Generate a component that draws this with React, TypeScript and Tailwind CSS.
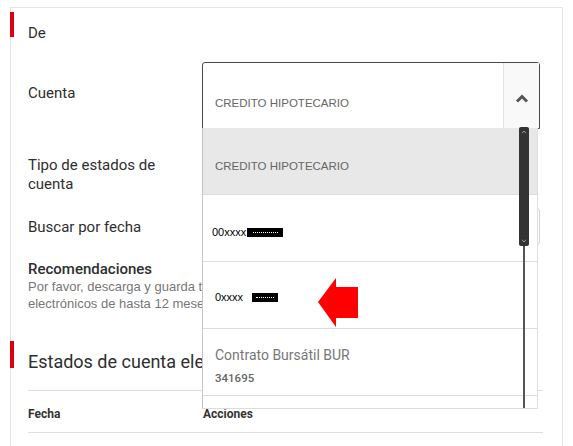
import React from "react";

function Masked({ w }: { w: number }) {
  return (
    <span
      className="inline-flex items-center justify-center bg-black h-[9px] align-middle"
      style={{ width: w }}
    >
      <span className="block h-px w-[70%] border-t border-dotted border-white" />
    </span>
  );
}

export default function App() {
  return (
    <div className="relative w-[573px] h-[446px] overflow-hidden bg-white pt-[7px] pl-[10px] font-['Roboto',sans-serif] text-[#2e2e2e]">
      <div className="w-[553px] h-[460px] border border-[#e4e4e4]">
        {/* De header */}
        <div className="flex items-start mt-[4px]">
          <div className="-ml-px w-[4px] h-[25px] bg-[#db0011]" />
          <div className="ml-[14px] mt-[12px] text-[15px] leading-[18px]">De</div>
        </div>

        <div className="pl-[17px]">
          {/* Cuenta row */}
          <div className="flex mt-[20px] h-[67px]">
            <div className="w-[174px] pt-[22px] text-[15px] leading-[18px]">Cuenta</div>
            <div className="relative w-[338px] h-[67px] z-10">
              <div className="flex h-full border border-[#4a4a4a] rounded-t-[3px] bg-white">
                <div className="flex-1 pl-[12px] pt-[33px] font-['Liberation_Sans',Arial,sans-serif] text-[11.5px] leading-[14px] text-[#666]">
                  CREDITO HIPOTECARIO
                </div>
                <div className="w-[36px] border-l border-[#e2e2e2] bg-[#f9f9f9] flex justify-center pt-[31px]">
                  <svg width="14" height="9" viewBox="0 0 14 9">
                    <polyline points="2,7.5 7,2.5 12,7.5" fill="none" stroke="#555" strokeWidth="3" />
                  </svg>
                </div>
              </div>

              {/* Dropdown list */}
              <div className="absolute left-0 top-[66px] w-[336px] h-[281px] bg-white border-l border-[#c4c4c4] border-r border-r-[#e0e0e0] border-b border-b-[#dcdcdc] font-['Liberation_Sans',Arial,sans-serif]">
                <div className="h-[67px] bg-[#e8e8e8] border-b border-[#dcdcdc] pl-[12px] pt-[31px] text-[11.5px] leading-[14px] text-[#666]">
                  CREDITO HIPOTECARIO
                </div>
                <div className="h-[67px] border-b border-[#dcdcdc] pl-[9px] pt-[30px] text-[11px] leading-[14px] text-black flex items-start">
                  <span>00xxxx</span>
                  <span className="ml-[1px] -mt-[1px]"><Masked w={36} /></span>
                </div>
                <div className="h-[67px] border-b border-[#dcdcdc] pl-[12px] pt-[28px] text-[11px] leading-[14px] text-black flex items-start">
                  <span>0xxxx</span>
                  <span className="ml-[9px] -mt-[1px]"><Masked w={26} /></span>
                </div>
                <div className="h-[67px] border-b border-[#dcdcdc] pl-[12px] pt-[17px]">
                  <div className="font-['Roboto',sans-serif] text-[14px] leading-[18px] text-[#777]">Contrato Bursátil BUR</div>
                  <div className="mt-[7px] font-['Roboto',sans-serif] text-[11.5px] leading-[14px] font-medium text-[#666]">341695</div>
                </div>

                {/* scrollbar */}
                <div className="absolute left-[316px] top-[-1px] w-[10px] h-[119px] rounded-[2px] bg-[#333] flex flex-col items-center justify-between py-[3px]">
                  <svg width="6" height="4" viewBox="0 0 6 4">
                    <polyline points="1,3.2 3,1 5,3.2" fill="none" stroke="#999" strokeWidth="1" />
                  </svg>
                  <svg width="6" height="4" viewBox="0 0 6 4">
                    <polyline points="1,0.8 3,3 5,0.8" fill="none" stroke="#999" strokeWidth="1" />
                  </svg>
                </div>
                <div className="absolute left-[320px] top-[118px] w-[2px] h-[162px] bg-[#555]" />
              </div>
            </div>
          </div>

          {/* Tipo row */}
          <div className="flex h-[79px]">
            <div className="w-[174px] pt-[27px] text-[15px] leading-[19px]">
              Tipo de estados de
              <br />
              cuenta
            </div>
          </div>

          {/* Buscar row */}
          <div className="flex h-[37px]">
            <div className="w-[174px] pt-[10px] text-[15px] leading-[18px]">Buscar por fecha</div>
            <div className="w-[338px] h-[37px] border border-[#d6d6d6] rounded-[3px]" />
          </div>

          {/* Recomendaciones */}
          <div className="mt-[15px] text-[15px] leading-[18px] font-medium">Recomendaciones</div>
          <div className="w-[174px] overflow-hidden font-['Liberation_Sans',Arial,sans-serif] text-[13px] leading-[17px] text-[#777] whitespace-nowrap">
            Por favor, descarga y guarda tus estados de cuenta
            <br />
            electrónicos de hasta 12 meses anteriores.
          </div>
        </div>

        {/* Estados header */}
        <div className="flex items-start mt-[29px]">
          <div className="-ml-px w-[4px] h-[27px] bg-[#db0011]" />
          <div className="ml-[14px] mt-[10px] w-[174px] overflow-hidden whitespace-nowrap text-[18px] leading-[22px]">
            Estados de cuenta electrónicos
          </div>
        </div>

        <div className="ml-[17px] mr-[19px] mt-[17px] border-t border-[#dedede]">
          <div className="flex h-[42px] border-b border-[#dedede] pt-[16px] text-[12px] leading-[14px] font-bold text-[#333]">
            <div className="w-[175px]">Fecha</div>
            <div>Acciones</div>
          </div>
        </div>
      </div>

      {/* red arrow annotation */}
      <svg className="absolute left-[316px] top-[276px] z-20" width="44" height="53" viewBox="0 0 44 53">
        <polygon points="2,26 20,2 20,11 42,11 42,42 20,42 20,51" fill="#ff0000" />
      </svg>
    </div>
  );
}
